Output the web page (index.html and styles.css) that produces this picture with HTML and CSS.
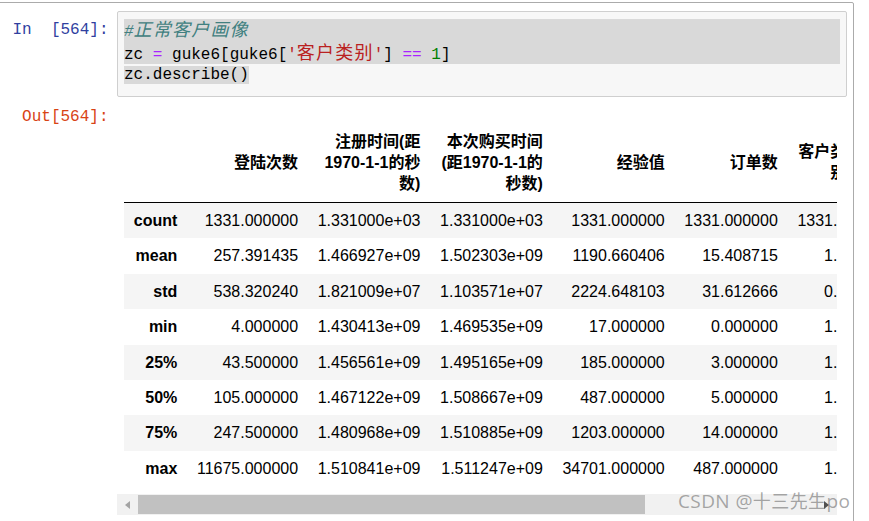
FILE: index.html
```html
<!DOCTYPE html>
<html lang="zh">
<head>
<meta charset="utf-8">
<title>zc.describe()</title>
<link rel="stylesheet" href="styles.css">
</head>
<body>
<div class="cell">
  <div class="row in-row">
    <div class="prompt in-prompt">In  [564]:</div>
    <div class="input">
      <div class="line sel"><span class="cm">#<span class="cjk">正常客户画像</span></span></div>
      <div class="line sel">zc <span class="op">=</span> guke6[guke6[<span class="st">'<span class="cjk">客户类别</span>'</span>] <span class="op">==</span> <span class="num">1</span>]</div>
      <div class="line"><span class="sel">zc.describe()</span></div>
    </div>
  </div>
  <div class="row out-row">
    <div class="prompt out-prompt">Out[564]:</div>
    <div class="out-area">
      <div class="scroll">
        <table class="df">
          <thead>
            <tr>
              <th></th>
              <th>登陆次数</th>
              <th>注册时间(距1970-1-1的秒数)</th>
              <th>本次购买时间(距1970-1-1的秒数)</th>
              <th>经验值</th>
              <th>订单数</th>
              <th>客户类别</th>
            </tr>
          </thead>
          <tbody>
            <tr><th>count</th><td>1331.000000</td><td>1.331000e+03</td><td>1.331000e+03</td><td>1331.000000</td><td>1331.000000</td><td>1331.0</td></tr>
            <tr><th>mean</th><td>257.391435</td><td>1.466927e+09</td><td>1.502303e+09</td><td>1190.660406</td><td>15.408715</td><td>1.0</td></tr>
            <tr><th>std</th><td>538.320240</td><td>1.821009e+07</td><td>1.103571e+07</td><td>2224.648103</td><td>31.612666</td><td>0.0</td></tr>
            <tr><th>min</th><td>4.000000</td><td>1.430413e+09</td><td>1.469535e+09</td><td>17.000000</td><td>0.000000</td><td>1.0</td></tr>
            <tr><th>25%</th><td>43.500000</td><td>1.456561e+09</td><td>1.495165e+09</td><td>185.000000</td><td>3.000000</td><td>1.0</td></tr>
            <tr><th>50%</th><td>105.000000</td><td>1.467122e+09</td><td>1.508667e+09</td><td>487.000000</td><td>5.000000</td><td>1.0</td></tr>
            <tr><th>75%</th><td>247.500000</td><td>1.480968e+09</td><td>1.510885e+09</td><td>1203.000000</td><td>14.000000</td><td>1.0</td></tr>
            <tr><th>max</th><td>11675.000000</td><td>1.510841e+09</td><td>1.511247e+09</td><td>34701.000000</td><td>487.000000</td><td>1.0</td></tr>
          </tbody>
        </table>
      </div>
      <div class="hscroll">
        <div class="sb-btn"><span class="tri tri-left"></span></div>
        <div class="sb-thumb"></div>
        <div class="sb-space"></div>
        <div class="sb-btn"><span class="tri tri-right"></span></div>
      </div>
    </div>
  </div>
</div>
<div class="watermark">CSDN @<span class="wm-cjk">十三先生</span>po</div>
</body>
</html>
```
FILE: styles.css
```css
html, body {
  margin: 0;
  padding: 0;
  background: #ffffff;
  overflow: hidden;
}
body {
  width: 869px;
  height: 521px;
  position: relative;
}
.cell {
  margin: 2px 15px 0 -10px;
  border: 1px solid #ababab;
  border-radius: 2px;
  padding: 8px 6px 40px 0;
  box-sizing: border-box;
}
.row {
  display: flex;
  align-items: flex-start;
}
.prompt {
  flex: 0 0 126px;
  box-sizing: border-box;
  text-align: right;
  padding-right: 8.5px;
  font-family: "Liberation Mono", "DejaVu Sans Mono", monospace;
  font-size: 16px;
  white-space: pre;
}
.in-prompt {
  color: #303f9f;
  padding-top: 8px;
  line-height: 22.67px;
}
.out-prompt {
  color: #d84315;
  padding-top: 9px;
  line-height: 22px;
}
.input {
  flex: 1;
  min-width: 0;
  border: 1px solid #cfcfcf;
  border-radius: 2px;
  background: #f7f7f7;
  padding: 7px 6px 9px 6px;
  font-family: "Liberation Mono", "DejaVu Sans Mono", monospace;
  font-size: 16px;
  color: #000;
}
.line {
  height: 22.67px;
  line-height: 22.67px;
  white-space: pre;
}
.sel {
  background: #d9d9d9;
}
.cjk {
  font-family: "Noto Sans CJK SC", sans-serif;
  font-size: 18px;
  line-height: 1;
  letter-spacing: 1.2px;
}
.cm {
  color: #408080;
  font-style: italic;
}
.op { color: #aa22ff; }
.st { color: #ba2121; }
.num { color: #008000; }

.out-area {
  flex: 1;
  min-width: 0;
  margin-right: 10px;
  padding-top: 26px;
}
.scroll {
  overflow: hidden;
}
.df {
  margin-left: 7px;
  border-collapse: collapse;
  border: none;
  font-family: "Liberation Sans", "Noto Sans CJK SC", sans-serif;
  font-size: 16px;
  color: #000;
}
.df th, .df td {
  text-align: right;
  vertical-align: middle;
  padding: 9px 9.8px 8px;
  line-height: 18.4px;
  white-space: normal;
}
.df thead th {
  padding: 8px 9.8px;
  line-height: 21px;
  font-weight: bold;
  border-bottom: 1px solid #000;
}
.df tbody th {
  font-weight: bold;
}
.df tbody tr:nth-child(odd) {
  background: #f5f5f5;
}
.hscroll {
  margin-top: 8px;
  height: 21px;
  background: #f1f1f1;
  display: flex;
}
.sb-btn {
  flex: 0 0 21px;
  display: flex;
  align-items: center;
  justify-content: center;
}
.sb-thumb {
  flex: 0 0 507px;
  margin: 1px 0;
  background: #c1c1c1;
}
.sb-space {
  flex: 1;
}
.tri {
  width: 0;
  height: 0;
  border-top: 4.5px solid transparent;
  border-bottom: 4.5px solid transparent;
}
.tri-left {
  border-right: 5px solid #a3a3a3;
}
.tri-right {
  border-left: 5px solid #505050;
}
.watermark {
  position: absolute;
  left: 678px;
  top: 488px;
  font-family: "Open Sans", "Noto Sans CJK SC", sans-serif;
  font-size: 19px;
  line-height: 24px;
  letter-spacing: 0.4px;
  color: rgba(110, 110, 110, 0.6);
  white-space: nowrap;
}
.wm-cjk {
  font-family: "Noto Sans CJK SC", sans-serif;
  font-size: 18px;
}
```
